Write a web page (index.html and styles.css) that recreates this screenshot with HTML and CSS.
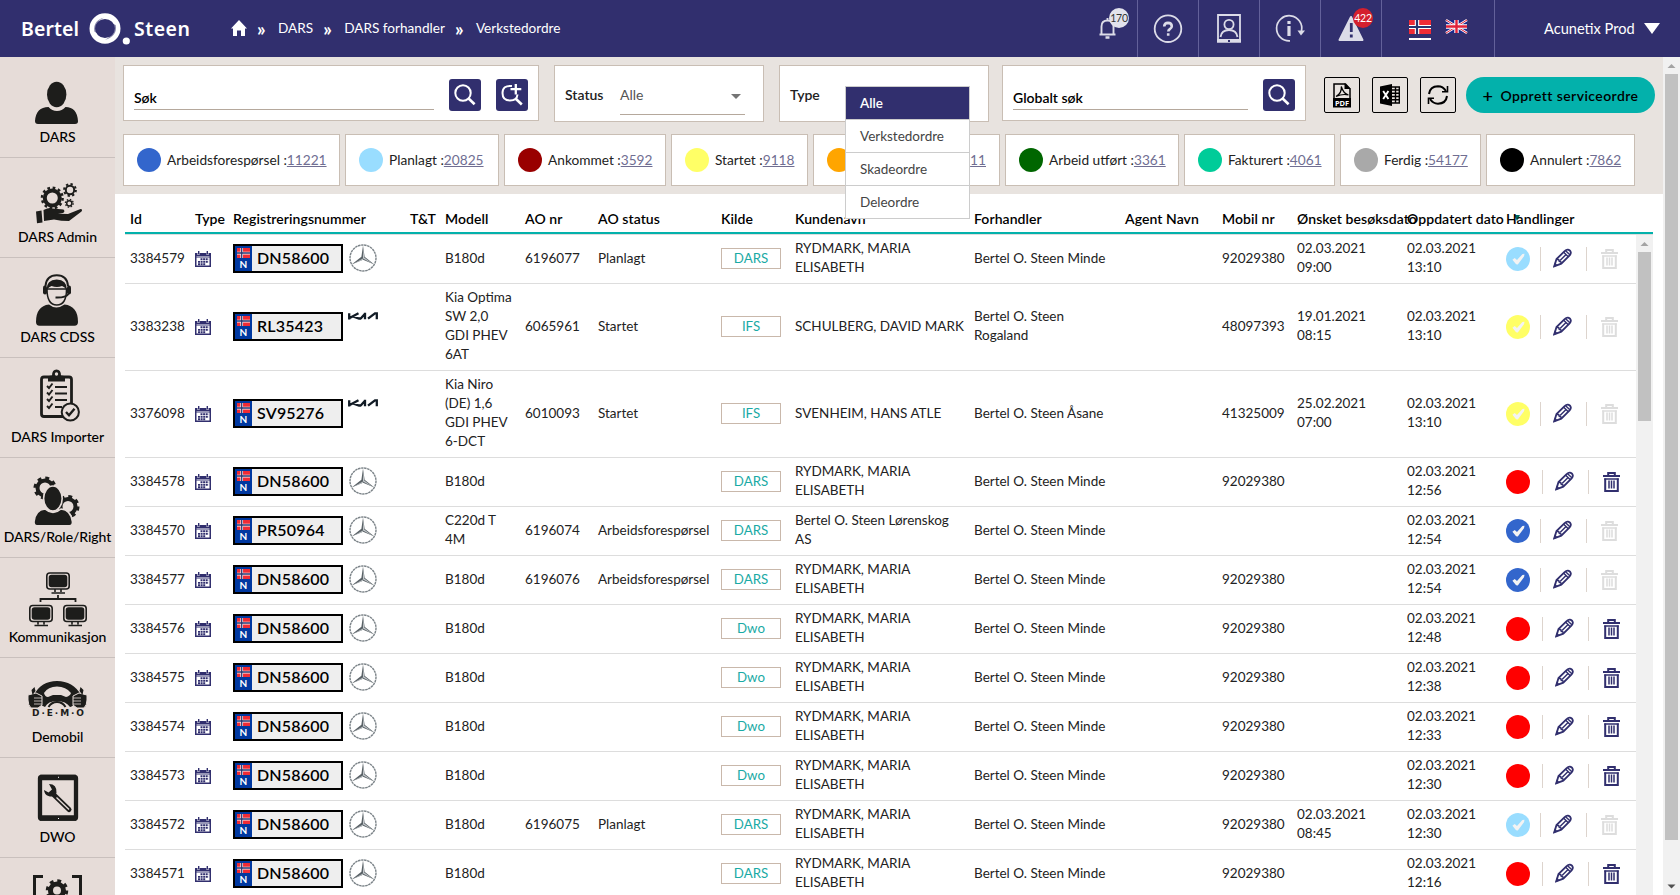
FILE: index.html
```html
<!DOCTYPE html>
<html lang="no">
<head>
<meta charset="utf-8">
<title>Verkstedordre</title>
<link rel="stylesheet" href="styles.css">
</head>
<body>
<svg class="defs" width="0" height="0">
  <symbol id="cal" viewBox="0 0 16 16"><path fill="#312f6e" d="M0 2h2.500v2h2v-2h7v2h2v-2H16v14H0z"/><path fill="#312f6e" d="M3 0h1.400v3.400H3zM11.600 0H13v3.400h-1.400z"/><path fill="#fff" d="M1.500 5.500h13v1h-13zM1.500 7h13v7.500h-13z"/><path stroke="#312f6e" stroke-width="1.900" stroke-dasharray="2 .6" d="M5.500 8.300h8M3 10.900h10.500M3 13.300h7.800"/></symbol>
  <symbol id="nflag" viewBox="0 0 22 16" preserveAspectRatio="none"><path fill="#ef2b35" d="M0 0h22v16H0z"/><path stroke="#fff" stroke-width="4.400" d="M8 0v16M0 8h22"/><path stroke="#27346f" stroke-width="2.200" d="M8 0v16M0 8h22"/></symbol>
  <symbol id="merc" viewBox="0 0 28 28"><circle cx="14" cy="14" r="13" fill="none" stroke="#7b8388" stroke-width="1.400" stroke-dasharray="2.500 .6"/><path fill="#5a6267" d="M14 1.500l1.600 11.300 9.800 7.700L14 15.800 2.600 20.500l9.800-7.700z"/><path fill="#c3c8cb" d="M14 3v11.500l10 5.400-8.800-6.300zM14 14.500l-9.600 5.200L14 15.700z"/></symbol>
  <symbol id="kia" viewBox="0 0 30 8"><path fill="none" stroke="#111b25" stroke-width="2.300" d="M1.200 7.500V1.300M1.200 6.300L10.500 1.300M5 4.300l6 2.200h2M17 .8v6.400M12.500 6.800L17 1.800M20 6.600L27 1.300h1.800v6"/></symbol>
  <symbol id="pen" viewBox="0 0 20 20"><path fill="none" stroke="#312f6e" stroke-width="1.900" d="M1.300 18.800l2.400-7.700L12.500 2.600q1.600-1.700 3.300-1.400 2.700.7 3 3.200.1 1.400-1.300 2.900L8.700 16z"/><path fill="none" stroke="#312f6e" stroke-width="1.500" d="M11.300 4l4.800 4.800M13.300 2.300l4.700 4.600M4 11.300l2 .5.600 1.700 1.700.5.400 2M7.400 12.600l5.800-5.700"/><path fill="#312f6e" d="M.5 19.600l1.400-4.800 3.200 3.200z"/></symbol>
  <symbol id="bin" viewBox="0 0 17 20"><path fill="none" stroke="currentColor" stroke-width="2" d="M0 4h17M5.200 3.500V1h6.600v2.500M2.200 6.500V19h12.600V6.500"/><path stroke="currentColor" stroke-width="1.500" d="M1.200 7h14.600M6 8.500v8M8.500 8.500v8M11 8.500v8"/></symbol>
  <symbol id="tick" viewBox="0 0 24 24"><path fill="#f3f3f3" d="M6.400 12.800l2.300-1.900 2.300 2.200 5.400-6.100 2.100-.3-.5 2.600-6.200 8.200-1.700-.2z"/></symbol>
  <symbol id="lens" viewBox="0 0 32 32"><circle cx="14" cy="14" r="7.700" fill="none" stroke="#fff" stroke-width="2"/><path stroke="#fff" stroke-width="2.600" d="M19.300 19.300l6.300 6"/></symbol>
</svg>

<header class="topbar">
  <div class="logo"><span class="logo-a">Bertel</span><svg class="logo-o" width="38" height="36" viewBox="0 0 38 36"><ellipse cx="16" cy="17.500" rx="12.700" ry="12.400" fill="none" stroke="#fff" stroke-width="5.600"/><path d="M5.300 20.500C4 13 9 7.500 15 6.800 9 9 7 13.500 7.700 22zM26.700 14c1.700 7.500-3 13-10.700 14.700 6-2.700 9-7.700 8.300-15.700z" fill="#312f6e" opacity=".55"/><circle cx="37.300" cy="30" r="3.600" fill="#fff"/></svg><span class="logo-b">Steen</span></div>
  <nav class="crumbs">
    <svg width="16" height="16" viewBox="0 0 16 16"><path fill="#fff" d="M8 0l8 8.500h-2V16h-4v-5.500H6V16H2V8.500H0z"/></svg>
    <b>»</b><span>DARS</span><b>»</b><span>DARS forhandler</span><b>»</b><span>Verkstedordre</span>
  </nav>
  <div class="tools">
    <div class="tool"><svg width="61" height="57" fill="none" stroke="#dcdce8" stroke-width="1.900"><path d="M23.500 34.500h16M25.500 34.500v-8q0-6 6-6t6 6v8M31.500 20v-2"/><path d="M29.500 37.500h4" stroke-width="2.500"/></svg><i class="badge pale">170</i></div>
    <div class="tool"><svg width="61" height="57" fill="none" stroke="#dcdce8" stroke-width="1.800"><circle cx="31" cy="28.700" r="13.300"/><path stroke-width="2.600" d="M27.200 26.500q.2-3.600 3.800-3.600 3.800.1 3.800 3.300 0 1.700-2 2.900-1.500 1-1.500 2.400M31.200 33.300v2.500"/></svg></div>
    <div class="tool"><svg width="61" height="57" fill="none" stroke="#dcdce8" stroke-width="1.800"><path d="M20 15h22v25H20z"/><path stroke-width="3.500" d="M19 41h24"/><circle cx="31" cy="24.500" r="4.600"/><path d="M22.500 37q1-7 8.500-7t8.500 7"/><path stroke="#312f6e" stroke-width="2" d="M30 41h2"/></svg></div>
    <div class="tool"><svg width="61" height="57" fill="none" stroke="#dcdce8" stroke-width="1.700"><path d="M31 40.900A12.600 12.600 0 1 1 42.500 31"/><path fill="#dcdce8" stroke="none" d="M38.500 30.500h7.500l-4 5z"/><path stroke-width="3.200" d="M30 21v3M30 26v10"/></svg></div>
    <div class="tool"><svg width="61" height="57"><path fill="#dcdce8" stroke="#dcdce8" stroke-width="2" stroke-linejoin="round" d="M31 17l11.500 23h-23z"/><path stroke="#312f6e" stroke-width="2.800" d="M31.300 23v9M31.300 34.500v3"/></svg><i class="badge red">422</i></div>
    <div class="langs">
      <svg class="on" width="22" height="20" viewBox="0 0 22 20"><use href="#nflag" width="22" height="14"/><path fill="#fff" d="M0 18h22v2H0z"/></svg>
      <svg width="21" height="13" viewBox="0 0 21 13"><path fill="#1a2a8c" d="M0 0h21v13H0z"/><path stroke="#fff" stroke-width="2.600" d="M0 0l21 13M21 0L0 13"/><path stroke="#e0223a" stroke-width="1" d="M0 0l21 13M21 0L0 13"/><path stroke="#fff" stroke-width="4.400" d="M10.500 0v13M0 6.500h21"/><path stroke="#e0223a" stroke-width="2.400" d="M10.500 0v13M0 6.500h21"/></svg>
    </div>
    <div class="user"><span>Acunetix Prod</span><svg width="16" height="11"><path fill="#fff" d="M0 0h16L8 11z"/></svg></div>
  </div>
</header>

<div class="shell">
<aside class="side">
  <a><svg width="60" height="56" fill="#1d1d1b"><ellipse cx="28.700" cy="22.500" rx="9.700" ry="12.700"/><path d="M7 49q1-14 13.500-14 3.500 4 8.500 4t8.500-4Q49 35 50 49q.2 3-3 3H10q-3 0-3-3z"/></svg><span>DARS</span></a>
  <a><svg width="60" height="56" fill="none" stroke="#1d1d1b"><circle cx="24.300" cy="26" r="7.500" stroke-width="4"/><circle cx="24.300" cy="26" r="10.300" stroke-width="2.500" stroke-dasharray="2.700 2.700"/><circle cx="42" cy="18" r="4.200" stroke-width="2"/><circle cx="42" cy="18" r="5.900" stroke-width="2" stroke-dasharray="2.300 2.300"/><circle cx="41.300" cy="31.300" r="2.600" stroke-width="1.500"/><circle cx="41.300" cy="31.300" r="3.900" stroke-width="1.300" stroke-dasharray="1.500 1.560"/><path fill="#1d1d1b" stroke="none" d="M8 39.500l5.500-1 1 12-5.500.7zM15.500 38q6-3 9-1.500l11 1q2 2-.5 3.500l-5 .7 10 .3L52.500 37q2.500.2 1 2.500L41 49q-8 0-15-1.500L16 49z"/></svg><span>DARS Admin</span></a>
  <a><svg width="60" height="56" fill="#1d1d1b"><path d="M8 50q0-16 13-17.500 7 6 15.500 0Q50 34 50 50q0 3.700-3.500 3.700h-35Q8 53.700 8 50z"/><path fill="#e6dcd8" stroke="#1d1d1b" stroke-width="1.500" d="M19 17q0 16 9.800 16T38.500 17z"/><path d="M18.500 18q0-10.500 10.200-10.500T39 18q-3-3.500-5-4-5 2-10.500 0-2 .5-5 4z"/><path fill="none" stroke="#1d1d1b" stroke-width="2" d="M17.500 14q1-10.700 11.300-10.700T40 14M40.500 22q-3 4-13 3.500"/><rect x="15" y="13.500" width="4" height="9" rx="2"/><rect x="39" y="13.500" width="4" height="9" rx="2"/></svg><span>DARS CDSS</span></a>
  <a><svg width="60" height="56" fill="none" stroke="#1d1d1b" stroke-width="2.800"><rect x="13.500" y="5" width="30" height="39.500" rx="2.500"/><path fill="#1d1d1b" stroke="none" d="M20 9.500V5.500q0-2 4-2Q24-2.500 28.500-2.500T33 3.500q4 0 4 2v4z"/><circle cx="28.500" cy="2" r="1.700" fill="#e6dcd8" stroke="none"/><path stroke-width="1.900" d="M19 14l2 2 3.500-4.500M19 20.500l2 2 3.500-4.500M19 27l2 2 3.500-4.500M19 34l2 2 3.500-4.500M27 15h12M27 21.500h12M27 28h12M27 35h7"/><circle cx="42.300" cy="40" r="8.600" fill="#e6dcd8" stroke-width="2"/><path stroke-width="2.400" d="M38 40l3 3.200 5.500-6.500"/></svg><span>DARS Importer</span></a>
  <a><svg width="60" height="56" fill="none" stroke="#1d1d1b"><circle cx="17" cy="16" r="7.500" stroke-width="4"/><circle cx="17" cy="16" r="10" stroke-width="3" stroke-dasharray="3.900 3.950"/><circle cx="40" cy="34.500" r="7.500" stroke-width="4"/><circle cx="40" cy="34.500" r="10" stroke-width="3" stroke-dasharray="3.900 3.950"/><path fill="#1d1d1b" stroke="#e6dcd8" stroke-width="1.600" d="M6 50q1-12 11-13 8 7 16 0 10 1 11.500 13 0 3.700-3 3.700H9q-3 0-3-3.700z"/><ellipse cx="24.900" cy="26.500" rx="9.300" ry="12.500" fill="#1d1d1b" stroke="#e6dcd8" stroke-width="1.600"/></svg><span>DARS/Role/Right</span></a>
  <a><svg width="60" height="56" fill="none" stroke="#1d1d1b" stroke-width="1.600"><g id="mon"><rect x="18.800" y="1" width="22.400" height="16" rx="3"/><rect x="21.500" y="3.500" width="17" height="11" rx="2" fill="#1d1d1b"/><path d="M27 17v3M33 17v3M23.500 21h13.500"/></g><use href="#mon" x="-17" y="32.500"/><use href="#mon" x="17" y="32.500"/><path stroke-width="1.800" d="M12.500 30v-3h35v3M30 23v4"/></svg><span>Kommunikasjon</span></a>
  <a><svg width="60" height="56" fill="#1d1d1b"><path fill-rule="evenodd" d="M6 23Q13 9 29 9t24 14l-6 8q-3 4-5 4-4-6-13-6t-12 6l-6-3zM16 21q1 4 4 4l5-2h8l5 2q4-1 5-4-5-6.500-14-6.500T16 21z"/><path fill="none" stroke="#1d1d1b" stroke-width="2" d="M20.500 35q3-5 8.500-5t8.500 5"/><path stroke="#e6dcd8" d="M0 23l8-2 6 3v9l-4 3H3q-3-3-3-8zM59 23l-8-2-6 3v9l4 3h7q3-3 3-8z"/><path d="M3.500 18l3-3 1 4-3 4zM55.500 18l-3-3-1 4 3 4z"/><path stroke="#e6dcd8" stroke-width=".8" d="M6 26h8M6 29h8M6 32h8M45 26h8M45 29h8M45 32h8"/><text x="30" y="44" text-anchor="middle" class="demo" textLength="52">D·E·M·O</text></svg><span>Demobil</span></a>
  <a><svg width="60" height="56" fill="none" stroke="#1d1d1b"><rect x="12" y="5" width="36" height="41.700" rx="1.500" stroke-width="4.300"/><path stroke-width="5.500" d="M12 5.500h36M12 46h36"/><path stroke="#fff" d="M30 5.300h1M30 46.500h1"/><path stroke-width="5" stroke-linecap="round" d="M24.500 21.500L41 37.500"/><path stroke="#e6dcd8" stroke-width="1.300" d="M28.500 25.500L41 37.500"/><path fill="#1d1d1b" stroke="none" d="M21 12q8 0 7.500 9-3 5-8 3-4-1-4.500-6l4.500 2.500 3.500-3z"/></svg><span>DWO</span></a>
  <a><svg width="60" height="56" fill="none" stroke="#1d1d1b"><path stroke-width="3" d="M15 4.500H6.500V52M44 4.500h8.500V52"/><circle cx="29" cy="18.500" r="6.500" stroke-width="5"/><circle cx="29" cy="18.500" r="9.500" stroke-width="3.500" stroke-dasharray="3.730 3.730"/></svg><span>&nbsp;</span></a>
</aside>

<main class="main">
  <section class="filters">
    <div class="row1">
      <div class="box search"><label class="field">Søk</label><button class="sq"><svg width="32" height="32"><use href="#lens"/></svg></button><button class="sq"><svg width="32" height="32" fill="none" stroke="#fff"><path stroke-width="2" d="M16 7q-9.500-1-9.500 7 0 7.500 7.500 7.500 7 0 7.500-6"/><path stroke-width="2.600" d="M19.500 19.500l6.300 6"/><path stroke-width="2.300" d="M19.800 5v10.500M14.500 10.200h10.800"/></svg></button></div>
      <div class="box pick"><label>Status</label><div class="sel"><span>Alle</span><svg width="10" height="5"><path fill="#757575" d="M0 0h10L5 5z"/></svg></div></div>
      <div class="box pick"><label>Type</label><ul class="menu"><li class="cur">Alle</li><li>Verkstedordre</li><li>Skadeordre</li><li>Deleordre</li></ul></div>
      <div class="box search glob"><label class="field">Globalt søk</label><button class="sq"><svg width="32" height="32"><use href="#lens"/></svg></button></div>
      <div class="acts">
        <button class="act"><svg width="18" height="25" viewBox="0 0 18 25"><path fill="none" stroke="#000" stroke-width="1.500" d="M1 15V1h11.500L17 6v9"/><path d="M11.500 0L18 6h-6.500zM0 15h18v9.500H0z"/><path fill="none" stroke="#000" stroke-width="1.200" d="M3 13.500Q9 10 8.300 3.500q2 7 7.200 8.500-6-1.500-12.500 1.500"/><text class="pdf" x="9" y="23" text-anchor="middle" textLength="14">PDF</text></svg></button>
        <button class="act"><svg width="20" height="22" viewBox="0 0 20 22"><path d="M0 2.500L12 0v22L0 19.500z"/><path fill="none" stroke="#000" stroke-width="1.400" d="M12 3h7.300v16H12M12 6h7M12 9.200h7M12 12.500h7M12 15.800h7M15.500 3v16"/><path stroke="#fff" stroke-width="1.900" d="M3.200 7l5.200 8M8.400 7l-5.200 8"/></svg></button>
        <button class="act"><svg width="22" height="20" viewBox="0 0 22 20" fill="none" stroke="#000" stroke-width="2"><path d="M2 9Q3 1.500 11 1.300q5 0 8 4.700M20 11q-1 7.500-9 7.700-5 0-8-4.700"/><path d="M20.500 1v5.700H15M1.500 19v-5.700H7" stroke-width="1.600"/></svg></button>
        <button class="new"><em>+</em>Opprett serviceordre</button>
      </div>
    </div>
    <div class="chips">
      <div class="chip"><i class="c-blue"></i><span>Arbeidsforespørsel :<u>11221</u></span></div>
      <div class="chip"><i class="c-sky"></i><span>Planlagt :<u>20825</u></span></div>
      <div class="chip"><i class="c-dred"></i><span>Ankommet :<u>3592</u></span></div>
      <div class="chip"><i class="c-yel"></i><span>Startet :<u>9118</u></span></div>
      <div class="chip"><i class="c-org"></i><span class="end"><u>11</u></span></div>
      <div class="chip"><i class="c-grn"></i><span>Arbeid utført :<u>3361</u></span></div>
      <div class="chip"><i class="c-mint"></i><span>Fakturert :<u>4061</u></span></div>
      <div class="chip"><i class="c-gry"></i><span>Ferdig :<u>54177</u></span></div>
      <div class="chip"><i class="c-blk"></i><span>Annulert :<u>7862</u></span></div>
    </div>
  </section>

  <section class="table">
    <div class="r head"><div>Id</div><div>Type</div><div>Registreringsnummer</div><div>T&amp;T</div><div>Modell</div><div>AO nr</div><div>AO status</div><div>Kilde</div><div>Kundenavn</div><div>Forhandler</div><div>Agent Navn</div><div>Mobil nr</div><div>Ønsket besøksdato</div><div>Oppdatert dato<svg class="sort" width="6" height="6"><path fill="#00695f" d="M0 0h6L3 6z"/></svg></div><div>Handlinger</div></div>
    <div class="scroll">
    <div class="rows">
      <div class="r"><div>3384579</div><div class="ic"><svg class="cal"><use href="#cal"/></svg></div><div class="reg"><span class="plate"><i><svg><use href="#nflag"/></svg>N</i>DN58600</span><svg class="merc"><use href="#merc"/></svg></div><div></div><div>B180d</div><div>6196077</div><div>Planlagt</div><div><span class="src">DARS</span></div><div>RYDMARK, MARIA<br>ELISABETH</div><div>Bertel O. Steen Minde</div><div></div><div>92029380</div><div>02.03.2021<br>09:00</div><div>02.03.2021<br>13:10</div><div class="ic ops"><i class="c-sky"><svg><use href="#tick"/></svg></i><svg class="pen"><use href="#pen"/></svg><svg class="bin off"><use href="#bin"/></svg></div></div>
      <div class="r"><div>3383238</div><div class="ic"><svg class="cal"><use href="#cal"/></svg></div><div class="reg"><span class="plate"><i><svg><use href="#nflag"/></svg>N</i>RL35423</span><svg class="kia"><use href="#kia"/></svg></div><div></div><div>Kia Optima<br>SW 2,0<br>GDI PHEV<br>6AT</div><div>6065961</div><div>Startet</div><div><span class="src">IFS</span></div><div>SCHULBERG, DAVID MARK</div><div>Bertel O. Steen<br>Rogaland</div><div></div><div>48097393</div><div>19.01.2021<br>08:15</div><div>02.03.2021<br>13:10</div><div class="ic ops"><i class="c-yel"><svg><use href="#tick"/></svg></i><svg class="pen"><use href="#pen"/></svg><svg class="bin off"><use href="#bin"/></svg></div></div>
      <div class="r"><div>3376098</div><div class="ic"><svg class="cal"><use href="#cal"/></svg></div><div class="reg"><span class="plate"><i><svg><use href="#nflag"/></svg>N</i>SV95276</span><svg class="kia"><use href="#kia"/></svg></div><div></div><div>Kia Niro<br>(DE) 1,6<br>GDI PHEV<br>6-DCT</div><div>6010093</div><div>Startet</div><div><span class="src">IFS</span></div><div>SVENHEIM, HANS ATLE</div><div>Bertel O. Steen Åsane</div><div></div><div>41325009</div><div>25.02.2021<br>07:00</div><div>02.03.2021<br>13:10</div><div class="ic ops"><i class="c-yel"><svg><use href="#tick"/></svg></i><svg class="pen"><use href="#pen"/></svg><svg class="bin off"><use href="#bin"/></svg></div></div>
      <div class="r"><div>3384578</div><div class="ic"><svg class="cal"><use href="#cal"/></svg></div><div class="reg"><span class="plate"><i><svg><use href="#nflag"/></svg>N</i>DN58600</span><svg class="merc"><use href="#merc"/></svg></div><div></div><div>B180d</div><div></div><div></div><div><span class="src">DARS</span></div><div>RYDMARK, MARIA<br>ELISABETH</div><div>Bertel O. Steen Minde</div><div></div><div>92029380</div><div></div><div>02.03.2021<br>12:56</div><div class="ic ops live"><i class="c-red"></i><svg class="pen"><use href="#pen"/></svg><svg class="bin"><use href="#bin"/></svg></div></div>
      <div class="r"><div>3384570</div><div class="ic"><svg class="cal"><use href="#cal"/></svg></div><div class="reg"><span class="plate"><i><svg><use href="#nflag"/></svg>N</i>PR50964</span><svg class="merc"><use href="#merc"/></svg></div><div></div><div>C220d T<br>4M</div><div>6196074</div><div>Arbeidsforespørsel</div><div><span class="src">DARS</span></div><div>Bertel O. Steen Lørenskog<br>AS</div><div>Bertel O. Steen Minde</div><div></div><div></div><div></div><div>02.03.2021<br>12:54</div><div class="ic ops"><i class="c-blue"><svg><use href="#tick"/></svg></i><svg class="pen"><use href="#pen"/></svg><svg class="bin off"><use href="#bin"/></svg></div></div>
      <div class="r"><div>3384577</div><div class="ic"><svg class="cal"><use href="#cal"/></svg></div><div class="reg"><span class="plate"><i><svg><use href="#nflag"/></svg>N</i>DN58600</span><svg class="merc"><use href="#merc"/></svg></div><div></div><div>B180d</div><div>6196076</div><div>Arbeidsforespørsel</div><div><span class="src">DARS</span></div><div>RYDMARK, MARIA<br>ELISABETH</div><div>Bertel O. Steen Minde</div><div></div><div>92029380</div><div></div><div>02.03.2021<br>12:54</div><div class="ic ops"><i class="c-blue"><svg><use href="#tick"/></svg></i><svg class="pen"><use href="#pen"/></svg><svg class="bin off"><use href="#bin"/></svg></div></div>
      <div class="r"><div>3384576</div><div class="ic"><svg class="cal"><use href="#cal"/></svg></div><div class="reg"><span class="plate"><i><svg><use href="#nflag"/></svg>N</i>DN58600</span><svg class="merc"><use href="#merc"/></svg></div><div></div><div>B180d</div><div></div><div></div><div><span class="src">Dwo</span></div><div>RYDMARK, MARIA<br>ELISABETH</div><div>Bertel O. Steen Minde</div><div></div><div>92029380</div><div></div><div>02.03.2021<br>12:48</div><div class="ic ops live"><i class="c-red"></i><svg class="pen"><use href="#pen"/></svg><svg class="bin"><use href="#bin"/></svg></div></div>
      <div class="r"><div>3384575</div><div class="ic"><svg class="cal"><use href="#cal"/></svg></div><div class="reg"><span class="plate"><i><svg><use href="#nflag"/></svg>N</i>DN58600</span><svg class="merc"><use href="#merc"/></svg></div><div></div><div>B180d</div><div></div><div></div><div><span class="src">Dwo</span></div><div>RYDMARK, MARIA<br>ELISABETH</div><div>Bertel O. Steen Minde</div><div></div><div>92029380</div><div></div><div>02.03.2021<br>12:38</div><div class="ic ops live"><i class="c-red"></i><svg class="pen"><use href="#pen"/></svg><svg class="bin"><use href="#bin"/></svg></div></div>
      <div class="r"><div>3384574</div><div class="ic"><svg class="cal"><use href="#cal"/></svg></div><div class="reg"><span class="plate"><i><svg><use href="#nflag"/></svg>N</i>DN58600</span><svg class="merc"><use href="#merc"/></svg></div><div></div><div>B180d</div><div></div><div></div><div><span class="src">Dwo</span></div><div>RYDMARK, MARIA<br>ELISABETH</div><div>Bertel O. Steen Minde</div><div></div><div>92029380</div><div></div><div>02.03.2021<br>12:33</div><div class="ic ops live"><i class="c-red"></i><svg class="pen"><use href="#pen"/></svg><svg class="bin"><use href="#bin"/></svg></div></div>
      <div class="r"><div>3384573</div><div class="ic"><svg class="cal"><use href="#cal"/></svg></div><div class="reg"><span class="plate"><i><svg><use href="#nflag"/></svg>N</i>DN58600</span><svg class="merc"><use href="#merc"/></svg></div><div></div><div>B180d</div><div></div><div></div><div><span class="src">Dwo</span></div><div>RYDMARK, MARIA<br>ELISABETH</div><div>Bertel O. Steen Minde</div><div></div><div>92029380</div><div></div><div>02.03.2021<br>12:30</div><div class="ic ops live"><i class="c-red"></i><svg class="pen"><use href="#pen"/></svg><svg class="bin"><use href="#bin"/></svg></div></div>
      <div class="r"><div>3384572</div><div class="ic"><svg class="cal"><use href="#cal"/></svg></div><div class="reg"><span class="plate"><i><svg><use href="#nflag"/></svg>N</i>DN58600</span><svg class="merc"><use href="#merc"/></svg></div><div></div><div>B180d</div><div>6196075</div><div>Planlagt</div><div><span class="src">DARS</span></div><div>RYDMARK, MARIA<br>ELISABETH</div><div>Bertel O. Steen Minde</div><div></div><div>92029380</div><div>02.03.2021<br>08:45</div><div>02.03.2021<br>12:30</div><div class="ic ops"><i class="c-sky"><svg><use href="#tick"/></svg></i><svg class="pen"><use href="#pen"/></svg><svg class="bin off"><use href="#bin"/></svg></div></div>
      <div class="r"><div>3384571</div><div class="ic"><svg class="cal"><use href="#cal"/></svg></div><div class="reg"><span class="plate"><i><svg><use href="#nflag"/></svg>N</i>DN58600</span><svg class="merc"><use href="#merc"/></svg></div><div></div><div>B180d</div><div></div><div></div><div><span class="src">DARS</span></div><div>RYDMARK, MARIA<br>ELISABETH</div><div>Bertel O. Steen Minde</div><div></div><div>92029380</div><div></div><div>02.03.2021<br>12:16</div><div class="ic ops live"><i class="c-red"></i><svg class="pen"><use href="#pen"/></svg><svg class="bin"><use href="#bin"/></svg></div></div>
    </div>
    <div class="bar inner"><svg width="17" height="17"><path fill="#a3a3a3" d="M4.500 11h8L8.500 7z"/></svg><div class="thumb"></div></div>
    </div>
  </section>
</main>
<div class="bar page"><svg width="17" height="17"><path fill="#a3a3a3" d="M4.500 11h8L8.500 7z"/></svg><div class="thumb"></div><svg class="down" width="17" height="17"><path fill="#505050" d="M4.500 6.500h8l-4 4z"/></svg></div>
</div>
</body>
</html>
```

FILE: styles.css
```css
* { box-sizing: border-box; }
body { margin: 0; width: 1680px; height: 895px; overflow: hidden; font-family: Lato, "Open Sans", sans-serif; font-size: 14px; line-height: 19px; color: #000; background: #fff; }
svg { display: block; flex: none; overflow: visible; }
.defs { position: absolute; }
button { border: 0; padding: 0; margin: 0; font: inherit; color: #000; display: flex; align-items: center; justify-content: center; flex: none; }
i, em { font-style: normal; }

/* top bar */
.topbar { height: 57px; background: #312f6e; color: #fff; display: flex; align-items: center; }
.logo { display: flex; align-items: center; width: 209px; height: 57px; margin-left: 21px; font-family: "Noto Sans", sans-serif; font-size: 19.500px; font-weight: 600; line-height: 57px; }
.logo-a { width: 68px; letter-spacing: .1px; }
.logo-b { padding-left: 7px; letter-spacing: .5px; }
.crumbs { display: flex; align-items: center; white-space: nowrap; padding-left: 1px; font-size: 13.600px; }
.crumbs svg { margin-right: 10px; margin-top: -1px; }
.crumbs b { font-size: 19px; width: 21px; }
.crumbs span { margin-right: 10px; }
.tools { display: flex; margin-left: auto; height: 57px; }
.tool { width: 61px; border-right: 1px solid #63619a; position: relative; }
.tool svg { margin-left: -1px; }
.badge { position: absolute; left: 32px; top: 8px; width: 20px; height: 20px; border-radius: 50%; font-size: 10.500px; line-height: 20px; text-align: center; letter-spacing: -.2px; }
.badge.pale { background: #e2e2ec; color: #333; }
.badge.red { background: #d4202e; }
.langs { width: 113px; border-right: 1px solid #63619a; padding: 20px 0 0 27px; display: flex; gap: 15px; }
.user { width: 185px; display: flex; align-items: center; gap: 9px; padding-left: 49px; font-size: 14.600px; white-space: nowrap; }

.shell { display: flex; height: 838px; overflow: hidden; }

/* side menu */
.side { width: 115px; flex: none; background: #e6dcd8; padding-top: 1px; overflow: hidden; font-weight: 500; }
.side a { height: 100px; padding-top: 14px; border-bottom: 1px solid #c9c0bd; display: flex; flex-direction: column; align-items: center; color: #000; }
.side span { line-height: 18px; white-space: nowrap; letter-spacing: -.06px; }
.demo { font: 900 9px "DejaVu Sans", sans-serif; }

/* filters */
.main { width: 1548px; flex: none; }
.filters { background: #e8e3df; height: 137px; padding: 8px 0 0 8px; }
.row1 { display: flex; align-items: flex-start; height: 69px; }
.box { background: #fff; border: 1px solid #c9beb4; height: 56px; display: flex; }
.search { width: 416px; padding: 13px 10px; gap: 15px; }
.field { width: 300px; height: 31px; border-bottom: 1px solid #b5a89c; padding-top: 9px; line-height: 19px; font-weight: 600; }
.sq { width: 32px; height: 32px; border-radius: 3px; background: #312f6e; }
.pick { width: 210px; height: 57px; margin-left: 15px; padding: 19px 0 0 10px; position: relative; font-weight: 600; color: #222; }
.pick label { width: 55px; }
.sel { width: 125px; height: 30px; border-bottom: 1px solid #b5a89c; display: flex; justify-content: space-between; padding: 0 4px 0 0; font-weight: 400; color: #555; }
.sel svg { margin-top: 9px; }
.menu { position: absolute; left: 65px; top: 20px; width: 125px; margin: 0; padding: 0; list-style: none; border: 1px solid #ccc; background: #fff; z-index: 5; font-weight: 400; font-size: 13.500px; color: #444; }
.menu li { height: 33px; line-height: 32px; padding-left: 14px; border-bottom: 1px solid #ccc; }
.menu li:last-child { border-bottom: 0; height: 32px; }
.menu .cur { background: #312f6e; color: #fff; font-weight: 600; }
.glob { width: 304px; margin-left: 13px; }
.glob .field { width: 235px; }
.acts { display: flex; gap: 12px; margin: 12px 0 0 18px; }
.act { width: 36px; height: 36px; border: 1px solid #000; border-radius: 2px; background: transparent; }
.pdf { font: 700 7.500px "Noto Sans", sans-serif; fill: #fff; }
.new { width: 189px; height: 36px; margin-left: -2px; border-radius: 18px; background: #03b1ab; font-weight: 600; letter-spacing: .42px; white-space: nowrap; }
.new em { font-size: 18px; margin-right: 7px; }
.chips { display: flex; gap: 5px; }
.chip { height: 52px; border: 1px solid #c9beb4; background: #fff; padding-left: 13px; display: flex; align-items: center; gap: 6px; white-space: nowrap; font-size: 13.700px; }
.chip:nth-child(1) { width: 217px; }
.chip:nth-child(2) { width: 154px; }
.chip:nth-child(3) { width: 162px; }
.chip:nth-child(4) { width: 137px; }
.chip:nth-child(5) { width: 187px; }
.chip:nth-child(6) { width: 174px; }
.chip:nth-child(7) { width: 151px; }
.chip:nth-child(8) { width: 141px; }
.chip:nth-child(9) { width: 149px; }
.chip i { width: 24px; height: 24px; border-radius: 50%; flex: none; }
.chip span { padding-bottom: 2px; color: #222; }
.chip span.end { margin-left: auto; padding-right: 13px; }
.chip u { color: #706e92; }
.c-blue { background: #36c; }
.c-sky { background: #9df; }
.c-dred { background: #900; }
.c-yel { background: #ff6; }
.c-org { background: #ffa500; }
.c-grn { background: #060; }
.c-mint { background: #0c9; }
.c-gry { background: #a9a9a9; }
.c-blk { background: #000; }
.c-red { background: #f00; }

/* order table */
.table { padding-left: 10px; width: 1538px; }
.r { display: grid; grid-template-columns: 65px 38px 177px 35px 80px 73px 123px 74px 179px 151px 97px 75px 110px 99px 1fr; align-items: center; padding: 4px 0 4px 5px; border-bottom: 1px solid #ddd; white-space: nowrap; min-height: 49px; }
.head { height: 41px; min-height: 0; width: 1528px; padding: 9px 0 0 5px; border-bottom: 1px solid #ddd; box-shadow: inset 0 -2px #03b1ab; font-weight: 600; letter-spacing: .07px; }
.head > div { position: relative; }
.sort { position: absolute; left: 107px; top: 6px; }
.scroll { display: flex; width: 1528px; }
.rows { width: 1511px; font-size: 13.500px; color: #222; }
.rows .r > div { padding-bottom: 2px; }
.rows .r > .ic { padding-bottom: 0; }
.cal { width: 16px; height: 16px; }
.reg { display: flex; align-items: flex-start; gap: 5px; }
.plate { width: 110px; height: 29px; border: 2px solid #000; background: #eee; color: #000; display: flex; font-size: 16px; font-weight: 600; line-height: 24px; letter-spacing: .2px; }
.plate i { width: 17px; margin-right: 5px; background: #0038a0; color: #fff; font: 700 10px/11px Lato, sans-serif; display: flex; flex-direction: column; align-items: center; padding-top: 2px; gap: 1px; }
.plate i svg { width: 13px; height: 10px; }
.merc { width: 28px; height: 28px; margin-left: 1px; }
.kia { width: 30px; height: 8px; }
.src { display: block; width: 60px; height: 21px; border: 1px solid #c9b8ab; color: #1aaaa5; text-align: center; font-size: 13.300px; }
.ops { display: flex; align-items: center; }
.ops i { width: 24px; height: 24px; border-radius: 50%; }
.ops i svg { width: 24px; height: 24px; }
.pen { width: 47px; height: 24px; padding: 1px 14px 3px 12px; margin-left: 10px; border-left: 1px solid #ddd4cd; border-right: 1px solid #ddd4cd; }
.live .pen { margin-left: 12px; }
.bin { width: 17px; height: 20px; margin-left: 14px; color: #312f6e; }
.bin.off { color: #ddd; }

/* scroll bars */
.bar { width: 17px; flex: none; background: #f1f1f1; }
.thumb { width: 13px; margin: 0 auto; background: #c1c1c1; }
.inner .thumb { height: 169px; }
.page { height: 838px; }
.page .thumb { height: 766px; }
.page .down { margin-top: 38px; }
```
